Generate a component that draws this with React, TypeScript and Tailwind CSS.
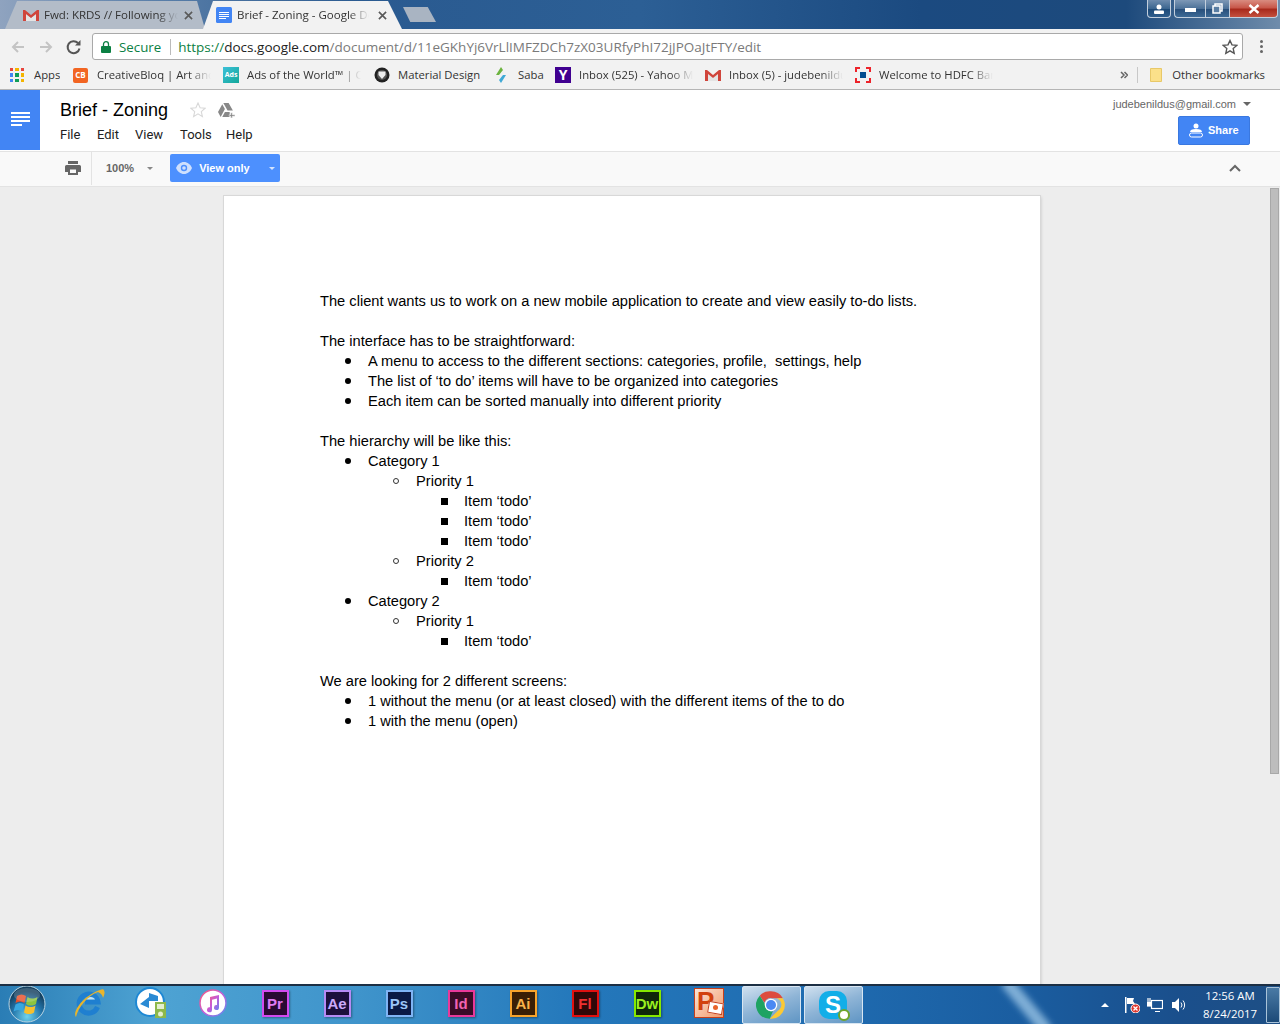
import { ReactNode } from "react";

const ui = "font-['Open_Sans','Liberation_Sans',sans-serif]";

function GmailIcon({ className = "h-3 w-4" }: { className?: string }) {
  return (
    <svg viewBox="0 0 16 12" className={className}>
      <path d="M3 5l5 4 5-4v7H3z" fill="#e4e4e4" />
      <path d="M0 1h2l6 5 6-5h2v11h-3V5L8 9 3 5v7H0z" fill="#d0453b" />
    </svg>
  );
}

function DocsIcon() {
  return (
    <svg viewBox="0 0 16 16" className="h-4 w-4 flex-none">
      <rect width="16" height="16" rx="1.5" fill="#4285f4" />
      <path d="M3 5h10v1H3zM3 7h10v1H3zM3 9h10v1H3zM3 11h7v1H3z" fill="#fff" />
    </svg>
  );
}

function CloseX() {
  return (
    <svg viewBox="0 0 10 10" className="h-[9px] w-[9px] flex-none" stroke="#5a5a5a" strokeWidth="1.8">
      <path d="M1 1l8 8M9 1l-8 8" />
    </svg>
  );
}

function AppsIcon() {
  const colors = ["#e8453c", "#f4b400", "#e8453c", "#4285f4", "#0f9d58", "#f4b400", "#4285f4", "#0f9d58", "#f4b400"];
  return (
    <div className="grid h-[14px] w-[14px] grid-cols-3 gap-[2px]">
      {colors.map((c, i) => (
        <span key={i} className="block" style={{ backgroundColor: c }} />
      ))}
    </div>
  );
}

function Bookmark({ icon, text, className, fade }: { icon: ReactNode; text: string; className: string; fade?: boolean }) {
  return (
    <div className={`flex h-full flex-none items-center ${className}`}>
      <div className="flex w-[24px] flex-none items-center">{icon}</div>
      <span
        className={`overflow-hidden whitespace-nowrap text-[11.3px] text-[#333] ${
          fade ? "w-[114px] [mask-image:linear-gradient(90deg,#000_80%,transparent)]" : ""
        }`}
      >
        {text}
      </span>
    </div>
  );
}

function Caret({ className }: { className: string }) {
  return <span className={`block h-0 w-0 border-x-transparent ${className}`} />;
}

function ChromeTabs() {
  return (
    <div className="relative flex h-[29px] flex-none items-end bg-[linear-gradient(90deg,#8fa3bf_0%,#5a7fa9_12%,#2a5a90_28%,#2c5f95_50%,#1b4a80_72%,#1d4a7c_88%,#6f8cab_100%)]">
      <div className="ml-[5px] flex h-[28px] w-[200px] flex-none items-center bg-[#b3bcc8] pl-[18px] pr-[12px] [clip-path:polygon(0_100%,12px_0,192px_0,100%_100%)]">
        <GmailIcon className="h-3 w-4 flex-none" />
        <span className="ml-[5px] w-[134px] overflow-hidden whitespace-nowrap text-[11.5px] text-[#333] [mask-image:linear-gradient(90deg,#000_85%,transparent)]">
          Fwd: KRDS // Following your
        </span>
        <span className="ml-auto">
          <CloseX />
        </span>
      </div>
      <div className="-ml-[2px] flex h-[28px] w-[199px] flex-none items-center bg-[#f2f2f2] pl-[13px] pr-[15px] [clip-path:polygon(0_100%,10px_0,185px_0,100%_100%)]">
        <DocsIcon />
        <span className="ml-[5px] w-[132px] overflow-hidden whitespace-nowrap text-[11.5px] text-[#333] [mask-image:linear-gradient(90deg,#000_85%,transparent)]">
          Brief - Zoning - Google Docs
        </span>
        <span className="ml-auto">
          <CloseX />
        </span>
      </div>
      <div className="mb-[7px] ml-[1px] h-[15px] w-[33px] flex-none bg-[#a9b4c2] [clip-path:polygon(0_0,75%_0,100%_100%,22%_100%)]" />
      <div className="ml-auto mr-[2px] flex h-[18px] self-start">
        <div className="mr-[3px] flex h-[18px] w-[24px] items-center justify-center rounded-b-[4px] border border-t-0 border-[#c3cfdd] bg-[linear-gradient(180deg,#6d8bad_0%,#3c6690_50%,#1d4a78_55%,#2e5d8c_100%)]">
          <svg viewBox="0 0 12 10" className="h-[10px] w-[12px]" fill="#fff">
            <circle cx="6" cy="3" r="2.5" />
            <rect x="1" y="6.5" width="10" height="3.5" rx="1" />
          </svg>
        </div>
        <div className="flex h-[18px] w-[31px] items-end justify-center rounded-bl-[4px] border border-t-0 border-r-0 border-[#c3cfdd] bg-[linear-gradient(180deg,#7d98b6_0%,#4c7199_50%,#284f7b_55%,#3d6a96_100%)] pb-[5px]">
          <span className="block h-[4px] w-[11px] bg-white" />
        </div>
        <div className="flex h-[18px] w-[24px] items-center justify-center border-b border-l border-[#c3cfdd] bg-[linear-gradient(180deg,#7d98b6_0%,#4c7199_50%,#284f7b_55%,#3d6a96_100%)]">
          <svg viewBox="0 0 11 11" className="h-[11px] w-[11px]" fill="none" stroke="#fff" strokeWidth="1.5">
            <rect x="3" y="1" width="7" height="7" />
            <rect x="1" y="3" width="7" height="7" fill="#5a7ea3" />
          </svg>
        </div>
        <div className="flex h-[18px] w-[49px] items-center justify-center rounded-br-[4px] border border-t-0 border-[#c3cfdd] bg-[linear-gradient(180deg,#d98c80_0%,#c8584a_45%,#a82a1c_55%,#c4503e_100%)]">
          <svg viewBox="0 0 12 10" className="h-[10px] w-[12px]" stroke="#fff" strokeWidth="2.4">
            <path d="M1.5 1l9 8M10.500 1l-9 8" />
          </svg>
        </div>
      </div>
    </div>
  );
}

function Omnibox() {
  return (
    <div className="flex h-[34px] flex-none items-center bg-[#f2f2f2] pl-[10px] pt-[1px]">
      <svg viewBox="0 0 16 16" className="h-4 w-4 flex-none" stroke="#c4c4c4" strokeWidth="2" fill="none">
        <path d="M14 8H3M8 3L3 8l5 5" />
      </svg>
      <svg viewBox="0 0 16 16" className="ml-[12px] h-4 w-4 flex-none" stroke="#c4c4c4" strokeWidth="2" fill="none">
        <path d="M2 8h11M8 3l5 5-5 5" />
      </svg>
      <svg viewBox="0 0 16 16" className="ml-[12px] h-4 w-4 flex-none" stroke="#555" strokeWidth="2" fill="none">
        <path d="M13.500 9.500A6 6 0 1 1 12 4" />
        <path d="M14.500 1v5.500H9" fill="#555" stroke="none" />
      </svg>
      <div className="ml-[10px] flex h-[27px] w-[1151px] flex-none items-center rounded-[3px] border border-[#a9a9a9] bg-white pl-[8px] pr-[4px]">
        <svg viewBox="0 0 10 12" className="h-[12px] w-[10px] flex-none">
          <path d="M2.500 5V3.200a2.500 2.500 0 0 1 5 0V5" stroke="#0b8043" strokeWidth="1.3" fill="none" />
          <rect y="5" width="10" height="7" rx="1" fill="#0b8043" />
        </svg>
        <span className="ml-[8px] pt-[2px] text-[13.3px] text-[#0b8043]">Secure</span>
        <span className="ml-[9px] h-[16px] w-px bg-[#bbb]" />
        <span className="ml-[7px] whitespace-nowrap pt-[2px] text-[13.5px] text-[#7a7a7a]">
          <span className="text-[#0b8043]">https://</span>
          <span className="text-[#222]">docs.google.com</span>
          /document/d/11eGKhYj6VrLlIMFZDCh7zX03URfyPhI72jJPOaJtFTY/edit
        </span>
        <svg viewBox="0 0 16 16" className="ml-auto h-4 w-4 flex-none" fill="none" stroke="#555" strokeWidth="1.4">
          <path d="M8 1.500l2 4.400 4.800.5-3.600 3.200 1 4.700L8 11.900l-4.200 2.400 1-4.700L1.200 6.400 6 5.900z" />
        </svg>
      </div>
      <div className="ml-[17px] flex flex-col gap-[2px]">
        <span className="h-[3px] w-[3px] rounded-full bg-[#666]" />
        <span className="h-[3px] w-[3px] rounded-full bg-[#666]" />
        <span className="h-[3px] w-[3px] rounded-full bg-[#666]" />
      </div>
    </div>
  );
}

function BookmarksBar() {
  return (
    <div className="flex h-[27px] flex-none items-center border-b border-[#b5b5b5] bg-[#f2f2f2] pb-[2px] pl-[10px] pr-[15px]">
      <Bookmark className="w-[63px]" icon={<AppsIcon />} text="Apps" />
      <Bookmark
        className="w-[150px]"
        fade
        icon={
          <span className="flex h-[15px] w-[15px] items-center justify-center rounded-[2px] bg-[#f26522] text-[8px] font-bold text-white">
            CB
          </span>
        }
        text="CreativeBloq | Art and Design"
      />
      <Bookmark
        className="w-[151px]"
        fade
        icon={
          <span className="flex h-4 w-4 items-center justify-center bg-[linear-gradient(135deg,#3cc0d8,#14a89a)] text-[7px] font-bold text-white">
            Ads
          </span>
        }
        text="Ads of the World™ | Creative"
      />
      <Bookmark
        className="w-[120px]"
        icon={
          <svg viewBox="0 0 16 16" className="h-4 w-4">
            <circle cx="8" cy="8" r="7.500" fill="#222" />
            <circle cx="8" cy="8" r="5" fill="#555" />
            <path d="M4.500 4.500h7v3.500L8 12 4.500 8z" fill="#eee" />
          </svg>
        }
        text="Material Design"
      />
      <Bookmark
        className="w-[61px]"
        icon={
          <svg viewBox="0 0 14 16" className="h-4 w-[14px]">
            <path d="M7 0L2 8l3 0L9 3z" fill="#6cb33f" />
            <path d="M7 16l5-8-3 0L5 13z" fill="#3fa9d6" />
          </svg>
        }
        text="Saba"
      />
      <Bookmark
        className="w-[150px]"
        fade
        icon={
          <span className="flex h-4 w-4 items-center justify-center bg-[#400090] text-[14px] font-bold leading-none text-white">
            Y
          </span>
        }
        text="Inbox (525) - Yahoo Mail"
      />
      <Bookmark className="w-[150px]" fade icon={<GmailIcon />} text="Inbox (5) - judebenildus@gmail" />
      <Bookmark
        className="w-[150px]"
        fade
        icon={
          <svg viewBox="0 0 16 16" className="h-4 w-4">
            <path d="M0 0h5v2H2v3H0zM11 0h5v5h-2V2h-3zM0 11h2v3h3v2H0zM14 11h2v5h-5v-2h3z" fill="#ed232a" />
            <rect x="5" y="5" width="6" height="6" fill="#004c8f" />
          </svg>
        }
        text="Welcome to HDFC Bank"
      />
      <div className="ml-auto flex h-full items-center">
        <svg viewBox="0 0 8 8" className="h-[8px] w-[8px]" fill="none" stroke="#666" strokeWidth="1.5">
          <path d="M1 1l3 3-3 3M4.500 1l3 3-3 3" />
        </svg>
        <span className="ml-[9px] h-[16px] w-px bg-[#c8c8c8]" />
        <svg viewBox="0 0 12 14" className="ml-[12px] h-[14px] w-[12px]">
          <path d="M0.500 0.500h11v13h-11z" fill="#fbe08a" stroke="#e8c868" />
        </svg>
        <span className="ml-[10px] whitespace-nowrap text-[11.3px] text-[#333]">Other bookmarks</span>
      </div>
    </div>
  );
}

function DocsHeader() {
  return (
    <div className="flex h-[61px] flex-none bg-white font-['Roboto','Liberation_Sans',sans-serif]">
      <div className="flex h-[60px] w-[40px] flex-none flex-col justify-center gap-[2px] bg-[#4285f4] pl-[11px] pb-[2px]">
        <span className="h-[2px] w-[19px] bg-white" />
        <span className="h-[2px] w-[19px] bg-white" />
        <span className="h-[2px] w-[19px] bg-white" />
        <span className="h-[2px] w-[11px] bg-white" />
      </div>
      <div className="ml-[20px] flex flex-col">
        <div className="mt-[8px] flex h-[24px] items-center">
          <span className="font-['Liberation_Sans',sans-serif] text-[18px] text-black">Brief - Zoning</span>
          <svg viewBox="0 0 16 16" className="ml-[22px] h-4 w-4" fill="none" stroke="#d8d8d8" strokeWidth="1.1">
            <path d="M8 1l2.100 4.700 5 .5-3.800 3.400 1.100 5L8 11.900l-4.400 2.700 1.100-5L.9 6.200l5-.5z" />
          </svg>
          <svg viewBox="0 0 16 14" className="ml-[12px] h-[15px] w-[17px]" fill="#888">
            <path d="M5 0h5l4 7h-5zM4 1l2.500 4.500L2.500 13 0 8.500zM4 13l2.500-4.500H11V13z" />
            <path d="M12 9h1.500v2H16v1.500h-2.500V14H12v-1.500h-1.500V11H12z" stroke="#fff" strokeWidth=".5" />
          </svg>
        </div>
        <div className="mt-[3px] flex text-[13px] text-[#222]">
          <span className="w-[37px]">File</span>
          <span className="w-[38px]">Edit</span>
          <span className="w-[45px]">View</span>
          <span className="w-[46px]">Tools</span>
          <span>Help</span>
        </div>
      </div>
      <div className="ml-auto mr-[30px] flex flex-col items-end">
        <div className="mr-[-1px] mt-[7px] flex items-center font-['Liberation_Sans',sans-serif] text-[11px] leading-[14px] text-[#666]">
          judebenildus@gmail.com
          <Caret className="ml-[7px] border-x-[4px] border-t-[4px] border-t-[#666]" />
        </div>
        <div className="mt-[5px] flex h-[29px] w-[72px] items-center rounded-[2px] border border-[#3a78e0] bg-[#4285f4] pl-[10px] text-white">
          <svg viewBox="0 0 14 15" className="h-[15px] w-[14px]" fill="#fff">
            <circle cx="7" cy="3" r="2.500" />
            <path d="M1 9c0-2 2-3 6-3s6 1 6 3z" />
            <rect x=".5" y="10" width="13" height="4" rx="2" fill="none" stroke="#fff" />
          </svg>
          <span className="ml-[5px] font-['Liberation_Sans',sans-serif] text-[11px] font-bold">Share</span>
        </div>
      </div>
    </div>
  );
}

function DocsToolbar() {
  return (
    <div className="flex h-[36px] flex-none items-center border-y border-[#e3e3e3] bg-[#f9f9f9] pb-[2px] font-['Liberation_Sans',sans-serif]">
      <svg viewBox="0 0 16 14" className="ml-[65px] h-[14px] w-4" fill="#666">
        <path d="M3 0h10v3H3zM1.500 4h13A1.500 1.500 0 0 1 16 5.500V11h-3v3H3v-3H0V5.500A1.500 1.500 0 0 1 1.500 4z" />
        <rect x="5" y="8.500" width="6" height="3.500" fill="#f9f9f9" />
      </svg>
      <span className="ml-[10px] h-[34px] w-px bg-[#e3e3e3]" />
      <span className="ml-[14px] text-[11px] font-bold text-[#666]">100%</span>
      <Caret className="ml-[13px] border-x-[3px] border-t-[3px] border-t-[#888]" />
      <div className="ml-[17px] flex h-[28px] w-[110px] items-center rounded-[2px] bg-[#4d90fe] pl-[6px] text-white">
        <svg viewBox="0 0 16 12" className="h-[12px] w-4">
          <path d="M8 0C4.500 0 1.500 2.500 0 6c1.500 3.500 4.500 6 8 6s6.500-2.500 8-6c-1.500-3.500-4.500-6-8-6z" fill="#cfe0fd" />
          <circle cx="8" cy="6" r="3.200" fill="#4d90fe" />
          <circle cx="8" cy="6" r="1.800" fill="#cfe0fd" />
        </svg>
        <span className="ml-[7px] text-[11px] font-bold">View only</span>
        <Caret className="ml-auto mr-[5px] border-x-[3px] border-t-[3px] border-t-[#d5e4fd]" />
      </div>
      <svg viewBox="0 0 12 8" className="ml-auto mr-[39px] h-[8px] w-[12px]" fill="none" stroke="#666" strokeWidth="2">
        <path d="M1 7l5-5 5 5" />
      </svg>
    </div>
  );
}

type Line = { level: 0 | 1 | 2 | 3; text: string };

const lines: Line[] = [
  { level: 0, text: "The client wants us to work on a new mobile application to create and view easily to-do lists." },
  { level: 0, text: "" },
  { level: 0, text: "The interface has to be straightforward:" },
  { level: 1, text: "A menu to access to the different sections: categories, profile,  settings, help" },
  { level: 1, text: "The list of ‘to do’ items will have to be organized into categories" },
  { level: 1, text: "Each item can be sorted manually into different priority" },
  { level: 0, text: "" },
  { level: 0, text: "The hierarchy will be like this:" },
  { level: 1, text: "Category 1" },
  { level: 2, text: "Priority 1" },
  { level: 3, text: "Item ‘todo’" },
  { level: 3, text: "Item ‘todo’" },
  { level: 3, text: "Item ‘todo’" },
  { level: 2, text: "Priority 2" },
  { level: 3, text: "Item ‘todo’" },
  { level: 1, text: "Category 2" },
  { level: 2, text: "Priority 1" },
  { level: 3, text: "Item ‘todo’" },
  { level: 0, text: "" },
  { level: 0, text: "We are looking for 2 different screens:" },
  { level: 1, text: "1 without the menu (or at least closed) with the different items of the to do" },
  { level: 1, text: "1 with the menu (open)" },
];

const indent = ["", "pl-[48px]", "pl-[96px]", "pl-[144px]"];

function Marker({ level }: { level: number }) {
  if (level === 1) return <span className="mr-[17px] ml-[-23px] h-[6px] w-[6px] flex-none rounded-full bg-black" />;
  if (level === 2) return <span className="mr-[17px] ml-[-23px] h-[6px] w-[6px] flex-none rounded-full border border-[#333]" />;
  return <span className="mr-[16px] ml-[-23px] h-[7px] w-[7px] flex-none bg-black" />;
}

function DocPage() {
  return (
    <div className="ml-[224px] mt-[9px] h-[900px] w-[816px] flex-none bg-white pl-[96px] pt-[95px] shadow-[0_0_0_1px_#d8d8d8,1px_1px_3px_rgba(0,0,0,0.18)]">
      <div className="font-['Liberation_Sans',Arial,sans-serif] text-[14.67px] leading-[20px] text-black">
        {lines.map((line, i) => (
          <div key={i} className={`flex h-[20px] items-center whitespace-pre ${indent[line.level]}`}>
            {line.level > 0 && <Marker level={line.level} />}
            {line.text}
          </div>
        ))}
      </div>
    </div>
  );
}

function Adobe({ label, frame, text, bg }: { label: string; frame: string; text: string; bg: string }) {
  return (
    <div className={`flex h-[27px] w-[27px] items-center justify-center border-2 font-['Liberation_Sans',sans-serif] text-[15px] font-bold leading-none shadow-[1px_1px_2px_rgba(0,0,0,0.35)] ${frame} ${text} ${bg}`}>
      {label}
    </div>
  );
}

function Slot({ children, active }: { children: ReactNode; active?: boolean }) {
  return active ? (
    <div className="flex h-[38px] w-[62px] flex-none items-center justify-center">
      <div className="flex h-[38px] w-[59px] items-center justify-center rounded-[2px] border border-[#d8e6f2] bg-[linear-gradient(160deg,#cfe0ef_0%,#8eb4d6_50%,#5f95c4_100%)]">
        {children}
      </div>
    </div>
  ) : (
    <div className="flex h-[38px] w-[62px] flex-none items-center justify-center pb-[4px]">{children}</div>
  );
}

function Taskbar() {
  return (
    <div className={`relative flex h-[40px] flex-none overflow-hidden border-t-2 border-[#1c2f44] bg-[linear-gradient(90deg,#2a7db5_0%,#4ea3d3_12%,#3f94cb_28%,#2478bb_45%,#1f6bb0_65%,#1a5da0_80%,#1a4f8c_92%,#1e4f85_100%)] ${ui}`}>
      <div className="absolute left-[1020px] top-[-12px] h-[64px] w-[13px] -rotate-[40deg] bg-[#a8d0ec]/70 blur-[3px]" />
      <div className="relative flex h-[38px] w-[58px] flex-none items-center justify-center pb-[2px] pr-[4px]">
        <svg viewBox="0 0 38 38" className="h-[38px] w-[38px]">
          <defs>
            <radialGradient id="orb" cx="50%" cy="85%" r="70%">
              <stop offset="0" stopColor="#6fd3ee" />
              <stop offset="0.6" stopColor="#2273a8" />
              <stop offset="1" stopColor="#14405f" />
            </radialGradient>
          </defs>
          <circle cx="19" cy="19" r="18" fill="url(#orb)" stroke="#b8d4e2" strokeWidth="1" />
          <path d="M9 11c3-2 6-2 9 0l-1.500 7c-3-2-6-2-9 0z" fill="#e8502a" />
          <path d="M19.500 12c3 2 6 2 10 0l-1.500 7c-3 2-7 2-10 0z" fill="#8cc43f" />
          <path d="M7.500 19.500c3-2 6-2 8.500 0l-1.500 7c-3-2-6-2-9 0z" fill="#38a7e0" />
          <path d="M17.500 20.500c3 2 7 2 10 0l-1.500 7c-3 2-7 2-10 0z" fill="#f8c02c" />
          <ellipse cx="19" cy="10" rx="13" ry="7" fill="#fff" fillOpacity=".18" />
        </svg>
      </div>
      <Slot>
        <svg viewBox="0 0 32 32" className="h-8 w-8">
          <path d="M24.500 20a9.500 9.500 0 1 1 .5-5H12" fill="none" stroke="#1f7fd0" strokeWidth="5" />
          <path d="M13 12.500h9c-1-3.500-7.500-3.500-9 0z" fill="#bfe2f7" />
          <path d="M3 30C-1 26 9 8 30 2c-1 0 4 1 0 9-1-5-4-5-5-6C14 9 5 21 3 30z" fill="#e9b52b" />
        </svg>
      </Slot>
      <Slot>
        <svg viewBox="0 0 32 32" className="h-8 w-8">
          <circle cx="15" cy="15" r="14" fill="#fff" stroke="#1e88d4" strokeWidth="2" />
          <path d="M5 17L14 10V6l9 3v5L14 14v7z" fill="#2a8ad4" />
          <rect x="20" y="15" width="11" height="16" fill="#8db84a" />
          <rect x="22" y="17" width="7" height="5" fill="#e4efcf" />
          <circle cx="25.500" cy="27" r="2.500" fill="#e4efcf" />
        </svg>
      </Slot>
      <Slot>
        <svg viewBox="0 0 28 28" className="h-7 w-7">
          <defs>
            <linearGradient id="itunes" x1="0" y1="0" x2="1" y2="1">
              <stop offset="0" stopColor="#f75a7c" />
              <stop offset="0.5" stopColor="#c65bd8" />
              <stop offset="1" stopColor="#5a8cf0" />
            </linearGradient>
          </defs>
          <circle cx="14" cy="14" r="13" fill="#fff" stroke="url(#itunes)" strokeWidth="1.500" />
          <path d="M11 8l9-2v12.500a2.500 2.500 0 1 1-2-2.400V9.500l-5 1.200v10a2.500 2.500 0 1 1-2-2.400z" fill="url(#itunes)" />
        </svg>
      </Slot>
      <Slot><Adobe label="Pr" frame="border-[#d24bf0]" text="text-[#e07bf5]" bg="bg-[#2a0a33]" /></Slot>
      <Slot><Adobe label="Ae" frame="border-[#b58bf5]" text="text-[#cbaafa]" bg="bg-[#1c0f3c]" /></Slot>
      <Slot><Adobe label="Ps" frame="border-[#7fb4f5]" text="text-[#9cc6f8]" bg="bg-[#0b1a45]" /></Slot>
      <Slot><Adobe label="Id" frame="border-[#e8399a]" text="text-[#f062b0]" bg="bg-[#3a0b26]" /></Slot>
      <Slot><Adobe label="Ai" frame="border-[#f7a32b]" text="text-[#f9b24a]" bg="bg-[#3a1f05]" /></Slot>
      <Slot><Adobe label="Fl" frame="border-[#e01010]" text="text-[#ef3030]" bg="bg-[#300808]" /></Slot>
      <Slot><Adobe label="Dw" frame="border-[#86e800]" text="text-[#9cf020]" bg="bg-[#10280a]" /></Slot>
      <Slot>
        <div className="relative h-[28px] w-[28px] bg-[linear-gradient(135deg,#fbe3d6,#f29b6c)] ring-1 ring-[#c5401c]">
          <span className="absolute left-[2px] top-[-2px] font-['Liberation_Sans',sans-serif] text-[26px] font-bold leading-[28px] text-[#d2410f]">P</span>
          <span className="absolute bottom-[3px] right-[0px] h-[12px] w-[15px] rotate-[10deg] border border-[#c5401c] bg-white" />
          <span className="absolute bottom-[7px] right-[5px] h-[5px] w-[5px] rounded-full bg-[#e8642c]" />
        </div>
      </Slot>
      <Slot active>
        <svg viewBox="0 0 48 48" className="h-[30px] w-[30px]">
          <path d="M24 2a22 22 0 0 1 19 11H24a11 11 0 0 0-10.500 7.500L6 9A22 22 0 0 1 24 2z" fill="#dd4b3e" />
          <path d="M43 13a22 22 0 0 1-21 33l13-13a11 11 0 0 0-2-20z" fill="#fcc934" />
          <path d="M6 9l8 13a11 11 0 0 0 13 12l-5 12A22 22 0 0 1 6 9z" fill="#1ea362" />
          <circle cx="24" cy="24" r="10" fill="#fff" />
          <circle cx="24" cy="24" r="8" fill="#4a89f3" />
        </svg>
      </Slot>
      <Slot active>
        <div className="relative flex h-[28px] w-[28px] items-center justify-center rounded-[10px] bg-[#12aee8] font-['Liberation_Sans',sans-serif] text-[24px] font-bold leading-none text-white">
          S
          <span className="absolute bottom-[-2px] right-[-3px] h-[12px] w-[12px] rounded-full border-2 border-[#6ea52a] bg-white" />
        </div>
      </Slot>
      <div className="relative ml-auto flex h-[38px] items-center">
        <span className="block h-0 w-0 border-x-[4px] border-b-[4px] border-x-transparent border-b-white" />
        <svg viewBox="0 0 16 16" className="ml-[15px] h-4 w-4">
          <path d="M1 0h1.500v16H1z" fill="#fff" />
          <path d="M3 1h7l-1 3 2 3H3z" fill="#fff" />
          <circle cx="11.500" cy="11.500" r="4.500" fill="#e03a30" stroke="#fff" />
          <path d="M9.500 9.500l4 4M13.500 9.500l-4 4" stroke="#fff" strokeWidth="1.3" />
        </svg>
        <svg viewBox="0 0 16 16" className="ml-[7px] h-4 w-4" fill="none" stroke="#fff" strokeWidth="1.2">
          <rect x="4.500" y="3.500" width="11" height="8" />
          <path d="M8 14.500h5M1 1v9M3 1v9" />
          <path d="M0 5h4v4H0z" fill="#fff" stroke="none" />
        </svg>
        <svg viewBox="0 0 16 16" className="ml-[8px] h-4 w-4" fill="#fff">
          <path d="M1 5h3l4-4v14l-4-4H1z" />
          <path d="M10 5.500a4 4 0 0 1 0 5M12 3.500a7 7 0 0 1 0 9" fill="none" stroke="#fff" />
        </svg>
        <div className="ml-[13px] flex w-[60px] flex-col items-center text-[11.4px] leading-[18px] text-white">
          <span>12:56 AM</span>
          <span>8/24/2017</span>
        </div>
        <div className="ml-[6px] h-[36px] w-[14px] rounded-[1px] border border-[#a9c3d9] bg-[linear-gradient(180deg,#4a7aa5,#1c4a78)]" />
      </div>
    </div>
  );
}

export default function App() {
  return (
    <div className={`flex h-[1024px] w-[1280px] flex-col overflow-hidden ${ui}`}>
      <ChromeTabs />
      <Omnibox />
      <BookmarksBar />
      <DocsHeader />
      <DocsToolbar />
      <div className="flex min-h-0 flex-1 overflow-hidden bg-[#ededed]">
        <div className="min-w-0 flex-1 overflow-hidden">
          <DocPage />
        </div>
        <div className="w-[10px] flex-none pt-[1px]">
          <div className="h-[586px] w-[9px] border border-[#a8a8a8] bg-[#bdbdbd]" />
        </div>
      </div>
      <Taskbar />
    </div>
  );
}
